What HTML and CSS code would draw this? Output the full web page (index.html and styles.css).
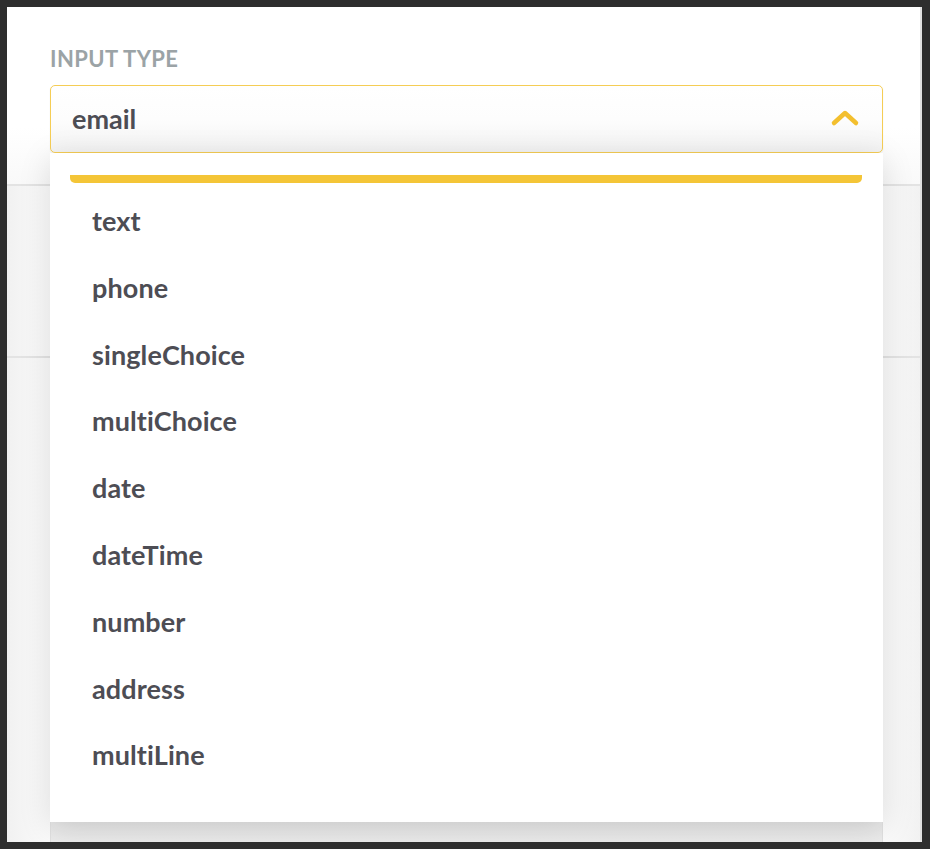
FILE: index.html
```html
<!DOCTYPE html>
<html>
<head>
<meta charset="utf-8">
<link rel="stylesheet" href="styles.css">
</head>
<body>
<div class="frame">
  <div class="page">
    <div class="field">
      <div class="label">INPUT TYPE</div>
      <div class="select">
        <span class="value">email</span>
        <svg class="chev" width="30" height="18" viewBox="0 0 30 18"><path d="M4 14 L15 4 L26 14" fill="none" stroke="#f3bf2e" stroke-width="4.5" stroke-linecap="round" stroke-linejoin="round"/></svg>
      </div>
      <div class="menu">
        <div class="bar"></div>
        <ul class="options">
          <li>text</li>
          <li>phone</li>
          <li>singleChoice</li>
          <li>multiChoice</li>
          <li>date</li>
          <li>dateTime</li>
          <li>number</li>
          <li>address</li>
          <li>multiLine</li>
        </ul>
      </div>
    </div>
    <div class="section s1"></div>
    <div class="section s2"></div>
    <div class="card"></div>
  </div>
</div>
</body>
</html>
```
FILE: styles.css
```css
html, body { margin: 0; padding: 0; background: #fff; }
body {
  font-family: Lato, "Open Sans", sans-serif;
  font-variant-ligatures: none;
}
.frame {
  box-sizing: border-box;
  width: 930px;
  height: 849px;
  border: 7px solid #2e2e2e;
  border-right-width: 8px;
  background: #fff;
  overflow: hidden;
}
.page {
  height: 100%;
  display: flex;
  flex-direction: column;
  background: linear-gradient(90deg, #f1f1f1 0, #fbfbfb 43px, #fbfbfb 876px, #f1f1f1 915px);
  border-right: 2px solid #e2e2e2;
  box-sizing: border-box;
}
.field {
  position: relative;
  padding: 40px 37px 0 43px;
  height: 177px;
  box-sizing: border-box;
  background: linear-gradient(180deg, #fff 0, #fff 120px, #f9f9f9 177px);
}
.label {
  font-size: 22px;
  line-height: 24px;
  font-weight: 700;
  color: #9ba3a6;
  letter-spacing: 0.4px;
}
.select {
  margin-top: 14px;
  height: 68px;
  box-sizing: border-box;
  border: 1px solid #f5cd55;
  border-radius: 5px;
  background: linear-gradient(180deg, #ffffff 0%, #fdfdfd 50%, #f3f3f3 100%);
  display: flex;
  align-items: center;
  justify-content: space-between;
  padding: 0 22px 0 21px;
  box-shadow: 0 1px 2px rgba(0,0,0,0.06);
}
.value {
  font-size: 27px;
  font-weight: 700;
  color: #4d4d54;
  margin-top: -2px;
}
.chev { margin-top: -2px; }
.menu {
  position: absolute;
  left: 43px;
  top: 146px;
  width: 833px;
  height: 669px;
  background: #fff;
  box-shadow: 0 6px 30px rgba(0,0,0,0.13);
  z-index: 2;
}
.bar {
  margin: 22px 21px 0 20px;
  height: 8px;
  background: #f4c537;
  border-radius: 0 0 5px 5px;
}
.options {
  list-style: none;
  margin: 0;
  padding: 21px 0 0 42px;
}
.options li {
  font-size: 27px;
  font-weight: 700;
  color: #4d4d54;
  height: 66.8px;
  line-height: 33px;
  letter-spacing: 0.1px;
}
.section {
  border-top: 2px solid #e3e3e3;
  box-sizing: border-box;
}
.s1 { height: 172px; }
.s2 { flex: 1; }
.card {
  height: 20px;
  margin: 0 37px 0 43px;
  background: linear-gradient(180deg, #e6e6e6, #ececec);
  border-left: 1px solid #e0e0e0;
  border-right: 1px solid #e0e0e0;
}
```
